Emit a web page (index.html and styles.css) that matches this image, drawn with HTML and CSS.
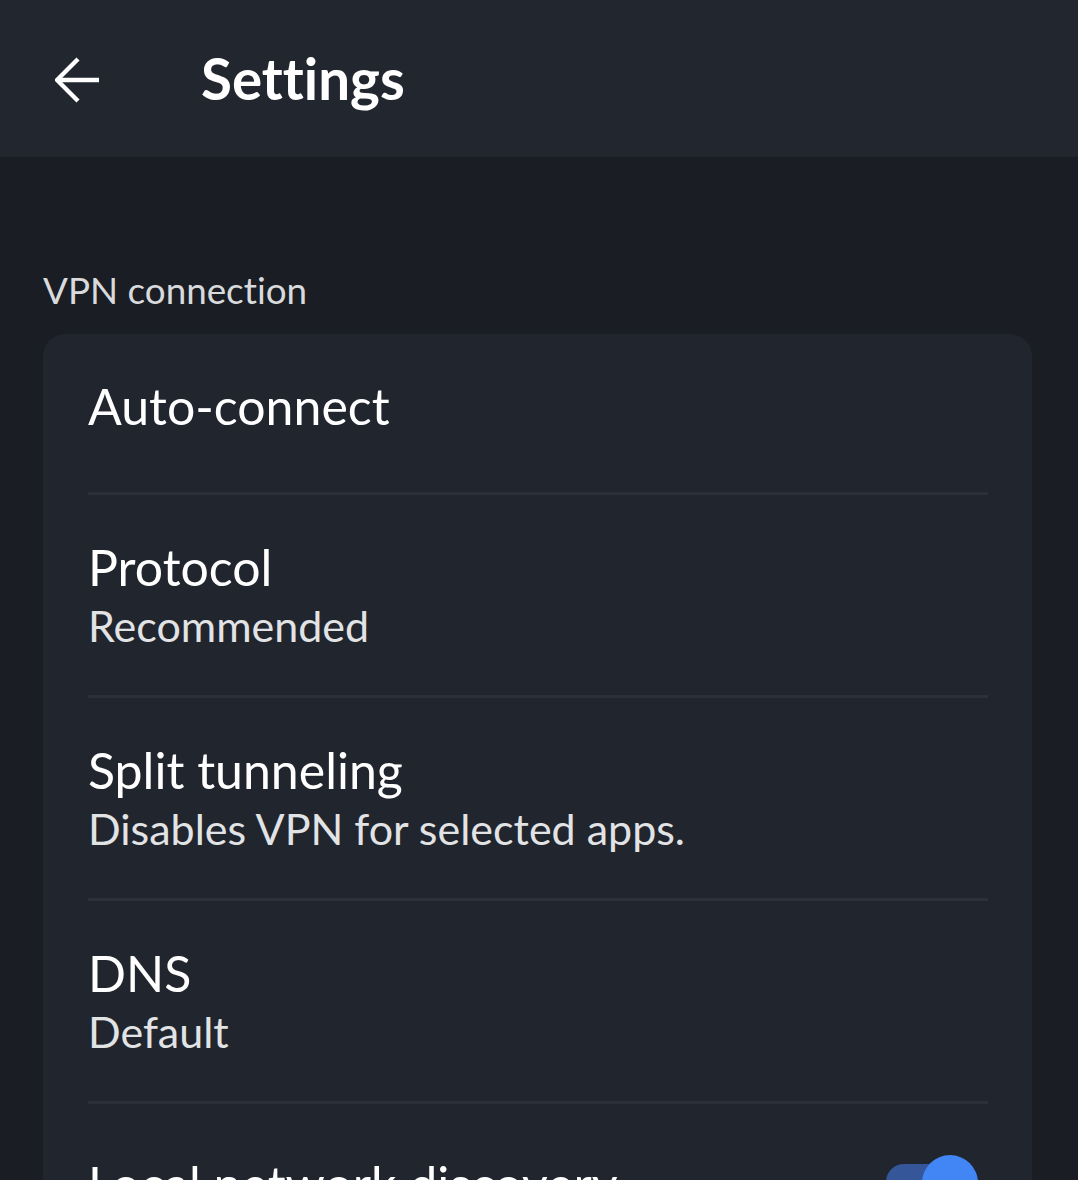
FILE: index.html
```html
<!DOCTYPE html>
<html lang="en">
  <head>
    <meta charset="UTF-8" />
    <meta name="viewport" content="width=device-width, initial-scale=1" />
    <title>Settings</title>
    <link rel="stylesheet" href="styles.css">
  </head>
  <body>
    <header class="topBar">
      <button class="backBtn" title="Back">
        <svg width="46" height="46" viewBox="0 0 46 46">
          <path d="M44 23H3M23 2L2 23L23 44" fill="none" stroke="#fff" stroke-width="4.4" stroke-linejoin="miter" />
        </svg>
      </button>
      <h1 class="pageTitle">Settings</h1>
    </header>

    <main class="content">
      <div class="sectionLabel">VPN connection</div>
      <div class="card">
        <div class="row single">
          <div class="rowTitle">Auto-connect</div>
        </div>
        <div class="row">
          <div class="rowTitle">Protocol</div>
          <div class="rowSub">Recommended</div>
        </div>
        <div class="row">
          <div class="rowTitle">Split tunneling</div>
          <div class="rowSub">Disables VPN for selected apps.</div>
        </div>
        <div class="row">
          <div class="rowTitle">DNS</div>
          <div class="rowSub">Default</div>
        </div>
        <div class="row toggleRow">
          <div class="rowTitle">Local network discovery</div>
          <div class="switch on"><div class="thumb"></div></div>
        </div>
      </div>
    </main>
  </body>
</html>
```

FILE: styles.css
```css
html,
body {
  margin: 0;
  padding: 0;
  height: 100vh;
  overflow: hidden;
  background: #1a1d24;
  font-family: Lato, "Noto Sans", sans-serif;
  font-variant-ligatures: none;
  color: #fff;
}

.topBar {
  height: 157px;
  background: #22262f;
  display: flex;
  align-items: center;
  padding-left: 55px;
  box-sizing: border-box;
}

.backBtn {
  background: none;
  border: none;
  padding: 0;
  width: 46px;
  height: 46px;
  margin-top: 2px;
  cursor: pointer;
}

.backBtn svg {
  display: block;
}

.pageTitle {
  margin: 0 0 0 100px;
  font-size: 56.5px;
  font-weight: 700;
  line-height: 1;
}

.content {
  padding: 111px 46px 0 43px;
}

.sectionLabel {
  font-size: 36.8px;
  line-height: 1.2;
  color: #d9dadc;
  padding-left: 0;
  margin-bottom: 22px;
}

.card {
  background: #21252e;
  border-radius: 22px;
  padding: 0 44px 0 45px;
}

.row {
  padding: 42px 0 41px;
  border-bottom: 3px solid #2c3039;
}

.row.single {
  padding-bottom: 56px;
}

.rowTitle {
  font-size: 50px;
  line-height: 60px;
}

.rowSub {
  font-size: 43px;
  line-height: 57px;
  color: #e2e3e5;
}

.toggleRow {
  display: flex;
  align-items: center;
  justify-content: space-between;
  padding-top: 50px;
  border-bottom: none;
}

.switch {
  position: relative;
  width: 82px;
  height: 36px;
  border-radius: 18px;
  background: #35579a;
  margin-right: 20px;
  margin-top: -4px;
}

.thumb {
  position: absolute;
  top: -9px;
  right: -10px;
  width: 56px;
  height: 56px;
  border-radius: 50%;
  background: #4285f4;
}
```
